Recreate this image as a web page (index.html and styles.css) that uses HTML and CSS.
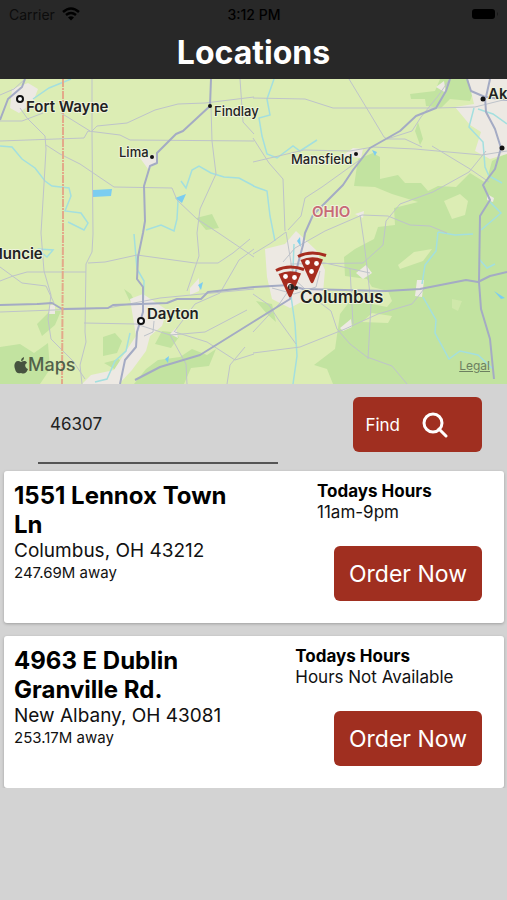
FILE: index.html
```
<!DOCTYPE html>
<html lang="en">
<head>
    <meta charset="UTF-8">
    <meta name="viewport" content="width=device-width, initial-scale=1.0">
    <title>Locations</title>
    <link rel="stylesheet" href="styles.css">
</head>
<body>
    <header class="top-bar">
        <div class="status-bar">
            <span class="carrier">Carrier
                <svg class="wifi" viewBox="0 0 18 14" width="18" height="14"><path d="M1 5Q9-2 17 5M4 8Q9 4 14 8" fill="none" stroke="#000" stroke-width="2.5"/><path d="M6 10.500Q9 8 12 10.500L9 13.500Z"/></svg>
            </span>
            <span class="time">3:12 PM</span>
            <svg class="battery" viewBox="0 0 28 12" width="28" height="12"><rect x="1" y="1" width="23" height="10" rx="3"/><path d="M26 4q2 2 0 4z" fill="#171717"/></svg>
        </div>
        <h1>Locations</h1>
    </header>

    <div class="map">
        <svg class="map-canvas" viewBox="0 0 507 305" role="img" aria-label="Map of Ohio">
            <defs>
                <g id="pizza">
                    <path d="M1 5.500Q14-1 29 4.500" fill="none" stroke="#a62c1f" stroke-width="3"/>
                    <path d="M3.500 9Q15 4 26 8.500L16.500 31Q15 33.500 13.500 31Z" fill="#a62c1f"/>
                    <circle cx="10.500" cy="11.500" r="2.400" fill="#fff"/>
                    <circle cx="19.500" cy="12.500" r="2.400" fill="#fff"/>
                    <circle cx="14.500" cy="20.500" r="2.400" fill="#fff"/>
                </g>
            </defs>
            <rect width="507" height="305" fill="#dcedb4"/>
            <!-- forest -->
            <g fill="#c2e3a0">
                <path d="M410 15L435 12 440 0H478L470 22 450 20 441 29 426 27 425 20 411 20ZM358 80L373 74 380 78 380 100 398 96 405 104 421 104 428 112 438 107 456 108 470 94 486 104 492 82 507 74V305H333L327 290 314 286 335 270 337 256 340 235 350 222 372 225 387 228 392 222 388 212 372 208 367 200 345 197 344 178 355 170 374 160 378 148 395 146 394 129 418 123 392 115 375 108 354 107Z"/>
                <path d="M418 43L423 60 420 66 415 52ZM0 268L20 265 34 274 48 264 50 290 40 305H0ZM37 245L50 232 61 232 55 246 42 257ZM103 258L115 254 122 262 117 274 103 277ZM155 265L162 252 171 253 179 258 171 269ZM146 290L158 281 180 278 192 270 207 276 216 270 209 287 191 289 184 305H134ZM104 284L119 280 123 287 116 291ZM124 210L131 215 139 231 135 233ZM196 139L212 135 219 149 206 151ZM256 222L272 225 276 243 267 235Z"/>
            </g>
            <g fill="#dcedb4">
                <path d="M398 186L414 173 432 170 423 182 400 190ZM444 122L460 115 468 122 465 136 452 140ZM362 243L372 234 392 237 388 244Z"/>
                <path d="M452 220L462 222 458 232 452 229Z" opacity=".5"/>
            </g>
            <!-- built-up areas -->
            <g fill="#ede9e3">
                <path d="M12 10L28 4 38 10 33 23 19 34 10 29ZM140 79L155 75 157 84 148 90ZM455 28L474 25 468 0H507V75L490 80 475 72 481 53 470 46ZM353 69L363 70 361 79 342 77ZM130 220L143 215 167 231 162 247 150 257 146 272 132 291 119 305H82L91 296 114 291 128 269 136 257ZM265 170L285 165 296 152 316 171 325 191 323 214 305 221 290 229 272 220 267 198ZM190 209L199 199 199 212 190 216ZM340 249L351 240 352 248 343 252ZM356 194L366 186 372 194 363 200ZM417 201L424 201 422 218 415 217ZM487 115L494 119 493 123 487 121ZM170 255L176 249 178 259ZM355 135L364 132 363 139ZM49 226L55 226 55 235 49 235ZM436 8L444 2 446 14Z"/>
            </g>
            <!-- water -->
            <g fill="#7bcdf0">
                <path d="M93 111L112 110 111 117 93 118ZM175 119L186 115 182 124ZM198 206L203 203 201 211ZM372 71L377 73 375 77ZM165 280L169 277 168 284ZM494 212L505 219 501 220ZM297 162L300 158 301 168Z"/>
            </g>
            <g class="river">
                <path d="M0 67L12 68 22 80 35 89 45 102 52 107 69 109 71 117 65 132 81 134 88 144 84 151 68 143M33 20L49 9 71 0M178 122L177 140 174 152 161 146 146 151M181 102L186 109 192 91 199 87 211 94 224 98 239 99 254 107M134 155L137 190 144 202 143 230M130 254L126 272 115 282 107 300 95 303M274 0L267 20 270 36 259 39 262 57 267 75 277 79 293 67 300 72 317 61M253 107L267 112 270 137 275 162M294 165L293 190 290 210 295 245 297 277 293 305M438 153L436 172 425 186 422 205M423 218L436 241 435 254 449 280 460 272 478 276 493 290M474 29L469 48 483 63 485 88 489 97 502 104M489 122L501 134 481 151M478 30L493 35 507 45M438 153L455 156 473 155M479 180L487 189 495 185M38 170L53 171 47 178 37 170"/>
            </g>
            <!-- roads -->
            <g class="road">
                <path d="M92 0L92 55 93 155 92 173 86 185 85 253 86 263 80 286 82 305M0 62L84 59 88 52 120 56 130 61 254 62M92 52L97 47 127 44 155 31 178 25 205 24 254 18M20 29L27 39 45 57 46 70 44 105 41 154 44 192 51 216 48 240 51 260 73 282 85 300M46 66L60 75 80 85 114 108 172 109 177 121 197 140 220 155 254 178M211 28L212 62 216 95 200 130 197 154 199 177 187 212M0 42L22 42 43 34M61 34L90 52M0 16L14 10 25 0M240 0L243 43 254 55"/>
                <path d="M0 188L22 204 46 207 54 224M0 202L13 197 27 193 86 193M88 184L105 183 137 176 195 184 218 184 233 174 250 160M0 233L108 229 160 219 254 210M84 244L136 245 170 256 205 253 247 231M170 256L186 285 187 305M174 253L195 225 220 214 239 181 254 170M175 253L207 263 235 281 254 275M144 257L153 253 154 242M245 268L230 286 227 305"/>
                <path d="M253 19L305 20 333 29 436 29 475 28 507 20M349 0L366 28 384 58 387 60 412 52 421 38 438 17 450 0M253 59L269 84 283 100 285 152M253 83L304 71 350 72 373 68 415 70 482 76 507 72M387 60L405 60 422 68M432 67L470 90 489 103M486 72L469 93 433 113 400 125 386 142 383 166 363 184 290 185M361 80L322 108 305 119 301 137 288 151M283 183L295 169 325 152 362 136 388 137 410 146 430 147 447 154M360 136L364 163 367 188 371 225 368 280M253 175L271 164 286 153 293 196M303 182L325 184 370 194M292 198L319 223 331 232 337 250 350 265 367 278 392 287 407 305M253 274L300 268 345 250 378 235 412 225 424 210M253 253L267 238 280 224 291 208M253 215L269 226 278 240 296 265M350 190L353 245M272 209L294 215 316 208 320 192"/>
            </g>
            <g class="road highway">
                <path d="M25 0L22 8 8 20 0 41"/>
                <path d="M211 0L210 27 183 52 176 55 157 74 157 84 150 87 144 107 145 142 143 154 138 178 137 200 143 208 143 233 137 253 136 268 125 281 120 305"/>
                <path d="M0 226L37 225 52 224 62 230 108 229 113 226 167 224 177 220 201 220 208 213 254 208 290 206 303 210 386 212 420 210 466 201 478 203 490 197 507 193"/>
                <path d="M450 0L446 12 436 29 416 37 400 52 370 69 353 91 343 106 313 136 305 154 303 166 295 196 290 220 253 243 200 276 160 288 135 301"/>
                <path d="M467 0L471 12 485 18 486 33 495 50 501 69 495 90 483 106 490 121 480 137 479 203 481 230 490 260 494 300"/>
                <path d="M490 0L486 18 507 21"/>
            </g>
            <path class="state-line" d="M63 0V155L62 305"/>
            <!-- cities -->
            <g class="city-ring"><circle cx="20" cy="20" r="3"/><circle cx="141" cy="242" r="3"/></g>
            <g fill="#111"><circle cx="152" cy="78" r="2"/><circle cx="210" cy="27" r="2"/><circle cx="356" cy="75" r="2"/><circle cx="483" cy="20" r="2.500"/><circle cx="502" cy="69" r="2.500"/></g>
            <text class="city" x="26" y="33">Fort Wayne</text>
            <text class="town" x="214" y="37">Findlay</text>
            <text class="town" x="119" y="78">Lima</text>
            <text class="town" x="291" y="85">Mansfield</text>
            <text class="city" x="488" y="20">Ak</text>
            <text class="city" x="-11" y="180">Muncie</text>
            <text class="city" x="147" y="240">Dayton</text>
            <text class="city capital" x="300" y="224">Columbus</text>
            <text class="state" x="312" y="138">OHIO</text>
            <use href="#pizza" x="297" y="172"/>
            <use href="#pizza" x="275" y="186"/>
            <circle cx="291" cy="208" r="3" fill="#222"/>
            <circle cx="296" cy="209" r="2" fill="#222"/>
            <path d="M290 206v4" stroke="#c9b6b0"/>
        </svg>
        <div class="map-brand">
            <svg viewBox="0 0 14 17" width="14" height="17"><path d="M7 5C9 4 12 3 13 6 10 7 11 11 14 12 12 17 10 17 7 16 4 17 2 16 1 12-1 7 2 2 7 5ZM7 4Q7 1 10 0 10 4 7 4Z"/></svg>
            <span>Maps</span>
        </div>
        <a class="legal" href="#">Legal</a>
    </div>

    <form class="search">
        <input class="zip" type="text" value="46307" aria-label="Zip code">
        <button class="button find" type="button">Find
            <svg viewBox="0 0 26 26" width="26" height="26" fill="none" stroke="#fff" stroke-width="3"><circle cx="11" cy="11" r="9"/><path d="M17 17l7 7" stroke-linecap="round"/></svg>
        </button>
    </form>

    <main class="locations">
        <section class="card">
            <div class="address">
                <h2>1551 Lennox Town Ln</h2>
                <p class="city-line">Columbus, OH 43212</p>
                <p class="distance">247.69M away</p>
            </div>
            <div class="side">
                <div class="hours">
                    <h3>Todays Hours</h3>
                    <p>11am-9pm</p>
                </div>
                <button class="button order" type="button">Order Now</button>
            </div>
        </section>
        <section class="card">
            <div class="address">
                <h2>4963 E Dublin Granville Rd.</h2>
                <p class="city-line">New Albany, OH 43081</p>
                <p class="distance">253.17M away</p>
            </div>
            <div class="side">
                <div class="hours">
                    <h3>Todays Hours</h3>
                    <p>Hours Not Available</p>
                </div>
                <button class="button order" type="button">Order Now</button>
            </div>
        </section>
    </main>
</body>
</html>
```
FILE: styles.css
```
*{box-sizing:border-box}
body{font-family:Inter,"Liberation Sans",sans-serif;background:#d3d3d3;margin:0;color:#111}
h1,h2,h3,p{margin:0}

.top-bar{background:#282828;padding-bottom:7px}
.status-bar{display:grid;grid-template-columns:1fr auto 1fr;align-items:center;height:28px;padding:0 8px 0 9px;font-size:14px;color:#000}
.carrier{display:flex;align-items:center;gap:7px;color:#0c0c0c}
.time{font-weight:500}
.battery{justify-self:end}
h1{color:#fff;font-size:32px;line-height:38px;font-weight:700;text-align:center;padding-top:6px}

.map{position:relative}
.map-canvas{display:block;width:100%;height:auto}
.river{fill:none;stroke:#a3dfdf;stroke-width:1.5}
.road{fill:none;stroke:#bec3ca;stroke-width:1}
.highway{stroke:#a4abc4;stroke-width:2;stroke-linejoin:round}
.state-line{fill:none;stroke:#e3a98a;stroke-width:2;stroke-dasharray:8 1 2 1}
.city-ring{fill:#fff;stroke:#111;stroke-width:2}
.map text{fill:#222;stroke:#eef4dc;stroke-width:2;paint-order:stroke;stroke-linejoin:round}
.map .city{font-size:15px;font-weight:600}
.map .capital{font-size:17px}
.map .town{font-size:13px;font-weight:500}
.map .state{font-size:15px;font-weight:600;fill:#c76a75}
.map-brand{position:absolute;left:14px;bottom:8px;display:flex;align-items:center;font-size:18px;font-weight:500;line-height:22px;color:#52614a}
.map-brand svg{fill:#46533f}
.legal{position:absolute;right:17px;bottom:10px;font-size:12px;line-height:16px;color:#6c7f60}

.search{display:flex;justify-content:space-between;align-items:flex-start;padding:13px 25px 7px 38px}
.zip{width:54%;height:67px;border:0;border-bottom:2px solid #555;background:none;padding:0 12px 12px;font:17px Inter,"Liberation Sans",sans-serif;color:#222;outline:none}
.button{height:55px;border:0;border-radius:6px;background:#a02f20;color:#fff;font-family:inherit;cursor:pointer}
.find{display:flex;align-items:center;gap:22px;padding:0 34px 0 12px;font-size:17px}

.locations{display:grid;gap:13px;padding:0 3px 0 4px}
.card{display:grid;grid-template-columns:1fr 46%;gap:20px;padding:10px 22px 22px 10px;background:#fff;border-radius:3px;box-shadow:0 1px 3px rgba(0,0,0,0.25)}
h2{font-size:24px;line-height:29px;font-weight:700;color:#000}
.city-line{font-size:19px;line-height:24px}
.distance{font-size:15px;line-height:19px}
.side{display:flex;flex-direction:column;align-items:center;gap:23px}
.hours{font-size:17px;line-height:21px}
h3{font-size:17px;line-height:21px;font-weight:700;color:#000}
.order{align-self:flex-end;padding:0 15px;font-size:23px}
```
